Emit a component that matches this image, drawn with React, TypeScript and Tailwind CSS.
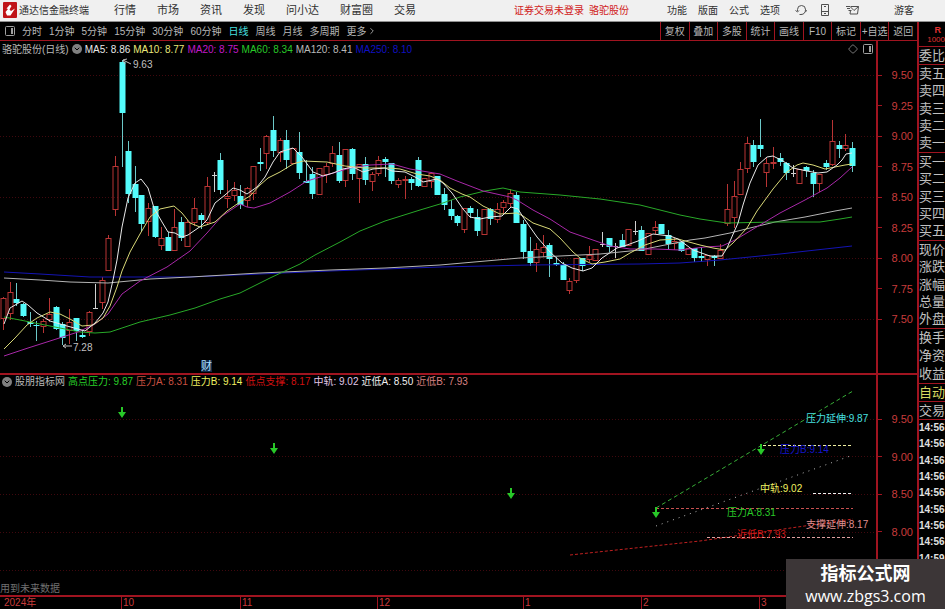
import React from 'react';
import { ChevronDown, ChevronRight, Diamond } from 'lucide-react';

const MENU = ['行情', '市场', '资讯', '发现', '问小达', '财富圈', '交易'];
const TOOLS = ['功能', '版面', '公式', '选项'];
const PERIODS = ['分时', '1分钟', '5分钟', '15分钟', '30分钟', '60分钟', '日线', '周线', '月线', '多周期'];
const ACTIONS = ['复权', '叠加', '多股', '统计', '画线', 'F10', '标记', '+自选', '返回'];

const MA_LEGEND = [
  { text: 'MA5: 8.86', color: 'text-[#e8e8e8]' },
  { text: 'MA10: 8.77', color: 'text-[#e8e87a]' },
  { text: 'MA20: 8.75', color: 'text-[#c018c8]' },
  { text: 'MA60: 8.34', color: 'text-[#28c828]' },
  { text: 'MA120: 8.41', color: 'text-[#b8b8b8]' },
  { text: 'MA250: 8.10', color: 'text-[#1010c0]' },
];

const SUB_LEGEND = [
  { text: '高点压力: 9.87', color: 'text-[#28d028]' },
  { text: '压力A: 8.31', color: 'text-[#c85040]' },
  { text: '压力B: 9.14', color: 'text-[#f0f060]' },
  { text: '低点支撑: 8.17', color: 'text-[#d01010]' },
  { text: '中轨: 9.02', color: 'text-[#e0c8e8]' },
  { text: '近低A: 8.50', color: 'text-[#f0f0f0]' },
  { text: '近低B: 7.93', color: 'text-[#d88080]' },
];

const PRICES = ['9.50', '9.25', '9.00', '8.75', '8.50', '8.25', '8.00', '7.75', '7.50'];
const SUB_PRICES = ['9.50', '9.00', '8.50', '8.00'];

const QUOTE_GROUPS = [
  { rows: ['委比'], height: 'h-[18px]', color: 'text-[#c0c0c0]' },
  { rows: ['卖五', '卖四', '卖三', '卖二', '卖一'], height: 'h-[88px]', color: 'text-[#c0c0c0]' },
  { rows: ['买一', '买二', '买三', '买四', '买五'], height: 'h-[88px]', color: 'text-[#c0c0c0]' },
  { rows: ['现价', '涨跌', '涨幅', '总量', '外盘'], height: 'h-[88px]', color: 'text-[#c0c0c0]' },
  { rows: ['换手', '净资', '收益'], height: 'h-[55px]', color: 'text-[#c0c0c0]' },
  { rows: ['自动'], height: 'h-[18px]', color: 'text-[#d8d860]' },
  { rows: ['交易'], height: 'h-[18px]', color: 'text-[#c0c0c0]' },
];

const TICKS = ['14:56', '14:56', '14:56', '14:56', '14:56', '14:56', '14:56', '14:56', '14:59'];

// kind, body top, body bottom, high, low (plot coordinates)
// d = falling, u = rising, x = doji
type Candle = [string, number, number, number, number];

const CANDLES: Candle[] = [
  ['u', 298, 319, 297, 330], ['u', 292, 314, 282, 320], ['d', 299, 303, 283, 306], ['d', 304, 316, 303, 317],
  ['d', 322, 324, 312, 327], ['d', 325, 326, 321, 341], ['u', 321, 327, 319, 333], ['u', 314, 320, 298, 322],
  ['d', 307, 329, 306, 330], ['d', 324, 338, 322, 345], ['u', 322, 331, 309, 344], ['d', 318, 331, 318, 341],
  ['d', 335, 337, 330, 338], ['u', 312, 332, 311, 336], ['x', 308, 308, 284, 308], ['u', 280, 303, 277, 309],
  ['u', 238, 271, 235, 271], ['u', 166, 210, 156, 216], ['d', 62, 113, 60, 167], ['d', 151, 194, 141, 203],
  ['d', 184, 198, 166, 212], ['d', 195, 224, 195, 232], ['u', 208, 222, 203, 236], ['d', 206, 237, 206, 238],
  ['u', 238, 246, 227, 250], ['d', 237, 251, 232, 251], ['u', 227, 251, 209, 251], ['d', 222, 238, 217, 241],
  ['u', 222, 247, 220, 247], ['u', 208, 223, 198, 226], ['d', 215, 220, 213, 229], ['u', 186, 223, 177, 225],
  ['x', 175, 175, 172, 192], ['d', 160, 190, 153, 194], ['u', 196, 199, 180, 208], ['u', 190, 196, 182, 201],
  ['d', 196, 205, 185, 209], ['u', 188, 201, 187, 207], ['u', 166, 194, 166, 200], ['d', 162, 164, 148, 171],
  ['u', 136, 154, 135, 169], ['d', 130, 151, 116, 157], ['u', 140, 153, 138, 162], ['d', 140, 160, 130, 169],
  ['u', 148, 164, 148, 164], ['d', 152, 173, 132, 179], ['d', 181, 183, 160, 183], ['d', 174, 194, 167, 199],
  ['u', 168, 195, 168, 195], ['u', 166, 175, 163, 183], ['u', 153, 164, 146, 167], ['d', 155, 181, 142, 183],
  ['u', 149, 181, 149, 187], ['d', 149, 174, 148, 180], ['u', 164, 179, 164, 203], ['d', 164, 180, 157, 185],
  ['u', 174, 182, 172, 191], ['u', 160, 174, 156, 176], ['d', 159, 162, 157, 177], ['d', 163, 181, 163, 184],
  ['u', 180, 185, 178, 188], ['u', 179, 181, 176, 199], ['d', 179, 183, 177, 190], ['d', 160, 186, 157, 187],
  ['u', 178, 187, 178, 187], ['u', 173, 182, 172, 188], ['d', 176, 195, 176, 195], ['d', 194, 205, 188, 210],
  ['d', 209, 216, 200, 220], ['d', 216, 223, 215, 226], ['u', 208, 230, 208, 233], ['d', 208, 213, 206, 218],
  ['d', 217, 231, 209, 236], ['u', 209, 235, 209, 235], ['d', 209, 219, 208, 225], ['u', 209, 220, 203, 223],
  ['u', 202, 208, 200, 214], ['u', 193, 204, 189, 207], ['d', 195, 223, 192, 223], ['d', 224, 252, 220, 259],
  ['d', 251, 263, 237, 266], ['u', 249, 263, 243, 272], ['u', 247, 253, 235, 257], ['d', 245, 259, 243, 277],
  ['d', 263, 265, 257, 266], ['d', 265, 280, 262, 280], ['u', 281, 291, 278, 294], ['u', 258, 281, 258, 283],
  ['d', 258, 266, 258, 271], ['u', 255, 260, 246, 262], ['u', 249, 261, 249, 261], ['x', 244, 244, 232, 247],
  ['d', 238, 247, 238, 252], ['x', 246, 246, 243, 258], ['d', 240, 247, 234, 247], ['u', 229, 246, 229, 246],
  ['x', 231, 231, 221, 235], ['d', 230, 251, 226, 251], ['u', 233, 255, 233, 255], ['u', 227, 231, 221, 234],
  ['d', 224, 234, 224, 234], ['d', 235, 244, 230, 250], ['u', 241, 244, 238, 250], ['d', 242, 251, 242, 252],
  ['u', 248, 255, 248, 255], ['d', 248, 258, 248, 262], ['d', 256, 258, 247, 262], ['u', 255, 260, 255, 266],
  ['d', 256, 258, 255, 266], ['u', 250, 259, 244, 259], ['u', 209, 224, 184, 226], ['u', 196, 218, 181, 228],
  ['u', 169, 195, 162, 195], ['u', 143, 169, 137, 173], ['d', 145, 162, 140, 167], ['d', 145, 149, 119, 157],
  ['u', 163, 173, 158, 187], ['u', 162, 163, 147, 169], ['d', 158, 162, 153, 166], ['d', 163, 173, 162, 180],
  ['x', 173, 173, 165, 177], ['u', 169, 184, 169, 184], ['d', 167, 171, 166, 177], ['d', 173, 184, 170, 197],
  ['u', 174, 184, 174, 192], ['d', 163, 167, 160, 170], ['u', 141, 165, 120, 166], ['d', 145, 149, 141, 158],
  ['u', 145, 149, 134, 151], ['d', 148, 166, 142, 172],
];

const MA_LINES = [
  { stroke: '#1414b4', points: '4,272 40,274 90,277 190,277 260,274 330,271 440,267 530,265 640,264 680,263 720,260 780,254 852,246' },
  { stroke: '#b4b4b4', points: '4,278 40,280 70,282 108,283 150,279 190,277 225,275 260,273 330,270 385,268 440,265 520,258 560,256 600,254 640,250 660,246 690,240 705,238 730,233 750,228 775,222 805,217 835,211 852,208' },
  { stroke: '#28a828', points: '4,317 20,320 50,326 80,332 95,333 110,332 122,328 140,322 170,315 195,308 220,299 240,293 270,278 300,264 315,255 340,242 360,231 385,221 420,210 440,204 460,197 485,191 503,188 520,192 560,195 600,199 640,205 680,215 700,219 727,223 775,222 820,222 840,219 852,217' },
  { stroke: '#a828a8', points: '4,356 28,348 50,341 78,332 95,324 108,314 122,294 140,281 167,267 190,251 207,233 222,216 240,204 247,207 254,208 270,203 290,192 307,181 330,174 350,168 370,165 392,164 410,169 440,174 457,181 483,191 510,197 517,200 533,210 550,219 570,232 590,239 610,246 630,249 655,249 680,250 705,247 722,246 735,240 755,228 780,213 805,200 827,188 840,178 852,167' },
  { stroke: '#d8d878', points: '4,349 15,338 27,325 37,318 50,312 60,314 70,319 82,326 93,325 103,318 110,306 117,287 122,271 130,252 140,234 150,217 160,209 174,206 182,213 190,223 200,227 215,222 227,211 240,202 250,196 260,185 268,178 280,172 293,164 303,161 327,162 345,166 365,168 390,168 400,169 417,174 430,176 440,180 450,188 462,194 470,197 483,206 500,214 517,213 523,216 533,223 550,229 560,238 573,252 580,258 592,264 605,262 620,259 630,253 645,245 660,240 678,239 700,245 713,248 725,250 733,243 747,228 757,211 773,189 787,172 797,165 803,163 813,165 825,169 835,167 845,165 852,164' },
  { stroke: '#e8e8e8', points: '4,324 10,308 22,301 28,305 37,313 50,321 67,326 78,329 85,331 95,323 103,313 108,302 113,280 117,260 122,227 128,198 135,183 141,179 148,188 154,208 162,222 168,232 175,233 182,237 188,235 201,226 207,220 215,203 225,195 233,188 240,190 247,194 257,187 265,177 273,162 280,152 293,148 302,157 313,172 323,176 333,173 343,169 353,167 363,172 373,169 385,168 392,171 405,172 417,178 423,182 437,179 443,183 452,193 463,209 470,217 480,219 490,217 502,216 511,207 518,209 523,217 537,237 550,252 562,263 572,268 583,271 592,268 602,258 617,248 627,245 638,241 653,234 670,236 678,239 693,250 710,256 722,256 727,248 738,223 743,205 750,183 758,165 767,157 773,156 783,161 793,168 807,171 818,173 827,172 837,165 842,160 846,154 852,153' },
];

const SIGNALS = [[122, 412], [274, 448], [511, 493], [656, 512], [761, 449]];

const SUB_LABELS = [
  { x: 806, y: 422, fill: '#48e0e0', text: '压力延伸:9.87' },
  { x: 780, y: 453, fill: '#1414c8', text: '压力B:9.14' },
  { x: 760, y: 492, fill: '#f0f060', text: '中轨:9.02' },
  { x: 727, y: 516, fill: '#28c828', text: '压力A:8.31' },
  { x: 806, y: 528, fill: '#e09090', text: '支撑延伸:8.17' },
  { x: 737, y: 538, fill: '#d01818', text: '近低B:7.93' },
];

function CandleMark({ candle, index }: { candle: Candle; index: number }) {
  const [kind, top, bottom, high, low] = candle;
  const x = Math.round(3.2 + 6.58 * index) + 0.5;

  if (kind === 'x') {
    return <path d={`M${x} ${high}V${low}M${x - 2.5} ${top + 0.5}h5`} stroke="#d0d0d0" fill="none" />;
  }
  if (kind === 'd') {
    return (
      <g>
        <path d={`M${x} ${high}V${low}`} stroke="#6cc8c8" />
        <rect x={x - 3} y={top} width="6" height={bottom - top} fill="#54fcfc" />
      </g>
    );
  }
  return (
    <g stroke="#b83434" fill="none">
      <path d={`M${x} ${high}V${top}M${x} ${bottom}V${low}`} />
      <rect x={x - 2.5} y={top + 0.5} width="5" height={Math.max(bottom - top - 1, 1)} />
    </g>
  );
}

function GridLines({ rows }: { rows: number[] }) {
  return (
    <g stroke="#40080e" strokeDasharray="1 2">
      {rows.map((y) => <path key={y} d={`M0 ${y + 0.5}H876`} />)}
    </g>
  );
}

function PriceChart() {
  return (
    <svg viewBox="0 57 876 316" className="block w-full" role="img" aria-label="日线">
      <GridLines rows={[75, 136, 197, 258, 319]} />
      {CANDLES.map((candle, i) => <CandleMark key={i} candle={candle} index={i} />)}
      {MA_LINES.map((line) => (
        <polyline key={line.stroke} points={line.points} fill="none" stroke={line.stroke} strokeLinejoin="round" />
      ))}
      <g fill="none" stroke="#c0c0c0">
        <path d="M131 64L123 60M123 60l4 -1M123 60l2 4" />
        <path d="M72 346H63M63 346l3 -2M63 346l3 2" />
      </g>
      <g fill="#c0c0c0" fontSize="10">
        <text x="133" y="68">9.63</text>
        <text x="73" y="351">7.28</text>
      </g>
      <rect x="201" y="360" width="11" height="12" fill="#102848" />
      <text x="201" y="370" fontSize="11" fill="#b0e0ff">财</text>
    </svg>
  );
}

function SignalChart() {
  return (
    <svg viewBox="0 389 876 206" className="block w-full" role="img" aria-label="股朋指标网">
      <GridLines rows={[419, 456, 494, 532, 570]} />
      <g fill="none">
        <path d="M656 508L853 391" stroke="#38b038" strokeDasharray="4 3" />
        <path d="M763 445.500H852" stroke="#f0f0a0" strokeDasharray="3 2" />
        <path d="M656 526L853 455" stroke="#b8b8b8" strokeDasharray="1 5" />
        <path d="M813 493.500H852" stroke="#f0f0f0" strokeDasharray="3 2" />
        <path d="M656 508.500H853" stroke="#c85050" strokeDasharray="3 2" />
        <path d="M570 555L700 541L770 531L853 519" stroke="#c02020" strokeDasharray="3 2" />
        <path d="M707 537.500H853" stroke="#e0a0a0" strokeDasharray="3 2" />
      </g>
      {SIGNALS.map(([x, y]) => (
        <path key={x} d={`M${x - 1} ${y - 5}h2v5h3l-4 6l-4 -6h3z`} fill="#28c828" />
      ))}
      <g fontSize="10">
        {SUB_LABELS.map((label) => (
          <text key={label.text} x={label.x} y={label.y} fill={label.fill}>{label.text}</text>
        ))}
      </g>
      <text x="0" y="592" fontSize="10" fill="#707070">用到未来数据</text>
    </svg>
  );
}

function PriceAxis({ prices, className }: { prices: string[]; className: string }) {
  return (
    <div className={`flex w-[41px] shrink-0 flex-col justify-between border-l-2 border-[#a01420] text-[11px] leading-4 text-[#c83c3c] ${className}`}>
      {prices.map((price) => (
        <div key={price} className="flex items-center justify-between pr-1">
          <span className="h-px w-1 bg-[#a01420]" />
          {price}
        </div>
      ))}
    </div>
  );
}

function CollapseButton() {
  return (
    <button aria-label="展开" className="flex size-[10px] shrink-0 items-center justify-center rounded-full bg-[#808080] text-black">
      <ChevronDown size={8} strokeWidth={3} />
    </button>
  );
}

function PanelIcon() {
  return (
    <svg width="10" height="10" viewBox="0 0 10 10" fill="none" stroke="#a0a0a0">
      <rect x="0.500" y="0.500" width="9" height="9" rx="1" />
      <rect x="6" y="2" width="2" height="6" fill="#a0a0a0" stroke="none" />
    </svg>
  );
}

function Header() {
  return (
    <header className="flex h-[22px] items-center border-b border-[#909090] bg-[#f0f0f0] pr-[31px] pl-[3px] pb-px text-[10px] whitespace-nowrap text-[#303030]">
      <svg width="14" height="16" viewBox="0 0 14 16" className="mr-[2px] shrink-0">
        <rect width="14" height="16" rx="1" fill="#c01418" />
        <path d="M7 2.500L3.500 6.500L5 7L2.500 10L4 13.500H7.500L12 6.500L8 9L6.500 7.500L8.500 4z" fill="#fff" />
      </svg>
      <span>通达信金融终端</span>
      <nav className="ml-[25px] flex gap-[21px] text-[11px]">
        {MENU.map((item) => <button key={item}>{item}</button>)}
      </nav>
      <div className="mr-[38px] ml-auto flex gap-[5px] text-[#d02020]">
        <span>证券交易未登录</span>
        <span>骆驼股份</span>
      </div>
      <div className="flex gap-[11px]">
        {TOOLS.map((item) => <button key={item}>{item}</button>)}
      </div>
      <div className="ml-[15px] flex items-center text-[#505050]">
        <button aria-label="客服">
          <svg width="12" height="11" viewBox="0 0 12 11" fill="none" stroke="currentColor">
            <path d="M2.500 6V4.500A4 4 0 0 1 10.500 4.500C10.500 7.500 9 9.500 6 9.500" />
            <path d="M0.500 5.500L2.500 7L4 5.500M10.500 4.500l1 1l-1 1.500M4.500 9.500h2" />
          </svg>
        </button>
        <button aria-label="手机" className="ml-[14px]">
          <svg width="8" height="12" viewBox="0 0 8 12" fill="none" stroke="currentColor">
            <path d="M0.500 0.500h7v11h-7zM0.500 7.500h7M3 9.500h2M3 2.500h2" />
          </svg>
        </button>
        <button aria-label="邮件" className="ml-[17px]">
          <svg width="14" height="10" viewBox="0 0 14 10" fill="none" stroke="currentColor">
            <path d="M4.500 1.500h8l-1 7.500h-7.500l0.500 -3.500M4.500 2l3.500 3.500l4.500 -4M0 1.500h4M1 3.500h3M2.500 5.500h3" />
          </svg>
        </button>
      </div>
      <button className="ml-[34px]">游客</button>
    </header>
  );
}

function Toolbar() {
  return (
    <div className="flex h-[19px] items-center justify-between border-b border-[#a01420] text-[10px] whitespace-nowrap text-[#b8b8b8]">
      <div className="flex h-full items-center gap-[7px]">
        <button aria-label="侧栏" className="flex h-full w-[15px] items-center justify-end">
          <PanelIcon />
        </button>
        {PERIODS.map((period) => (
          <button key={period} className={period === '日线' ? 'text-[#48e0e0]' : ''}>{period}</button>
        ))}
        <button className="flex items-center">更多<ChevronRight size={10} /></button>
      </div>
      <div className="grid h-full w-[257px] grid-cols-9">
        {ACTIONS.map((action) => (
          <button key={action} className="border-l border-[#a01420]">{action}</button>
        ))}
      </div>
    </div>
  );
}

function QuotePanel() {
  return (
    <aside className="w-[28px] shrink-0 border-l-2 border-[#a01420] text-[13px] whitespace-nowrap">
      <div className="flex h-[24px] flex-col items-end pt-[3px] text-[#e03030]">
        <b className="pr-1 text-[9px] leading-[10px]">R</b>
        <span className="text-[8px] leading-[10px]">1000</span>
      </div>
      {QUOTE_GROUPS.map((group) => (
        <div key={group.rows[0]} className={`flex flex-col border-t border-[#a01420] ${group.height} ${group.color}`}>
          {group.rows.map((row) => (
            <span key={row} className="flex flex-1 items-center leading-4">{row}</span>
          ))}
        </div>
      ))}
      <div className="flex h-[148px] flex-col border-t border-[#a01420] text-[10px] leading-4 font-bold text-[#e0e0e0]">
        {TICKS.map((tick, i) => <span key={i} className="flex flex-1 items-center">{tick}</span>)}
      </div>
    </aside>
  );
}

function TimeAxis() {
  const label = 'border-l border-[#a01420] pl-px';
  return (
    <div className="grid grid-cols-[121fr_119fr_137fr_146fr_118fr_118fr_158fr] border-t-2 border-[#a01420] text-[10px] leading-3 text-[#c83c3c]">
      <span className="pl-1">2024年</span>
      <span className={label}>10</span>
      <span className={label}>11</span>
      <span className={label}>12</span>
      <span className={label}>1</span>
      <span className={label}>2</span>
      <span className={label}>3</span>
    </div>
  );
}

export default function App() {
  return (
    <div className="flex min-h-screen flex-col bg-black font-['Liberation_Sans','Noto_Sans_CJK_SC',sans-serif]">
      <Header />
      <div className="flex flex-1">
        <main className="min-w-0 flex-1">
          <Toolbar />
          <section className="flex">
            <div className="min-w-0 flex-1">
              <div className="flex h-4 items-center gap-[3px] pl-[2px] text-[10px] whitespace-nowrap">
                <span className="text-[#b8b8b8]">骆驼股份(日线)</span>
                <CollapseButton />
                {MA_LEGEND.map((ma) => <span key={ma.text} className={ma.color}>{ma.text}</span>)}
                <div className="mr-[3px] ml-auto flex items-center gap-[5px]">
                  <Diamond size={10} color="#909090" />
                  <PanelIcon />
                </div>
              </div>
              <PriceChart />
            </div>
            <PriceAxis prices={PRICES} className="pt-[26px] pb-[46px]" />
          </section>
          <section className="flex border-t-2 border-[#a01420]">
            <div className="min-w-0 flex-1">
              <div className="flex h-[14px] items-center gap-[3px] pl-[2px] text-[10px] leading-3 whitespace-nowrap">
                <CollapseButton />
                <span className="text-[#b8b8b8]">股朋指标网</span>
                {SUB_LEGEND.map((item) => <span key={item.text} className={item.color}>{item.text}</span>)}
              </div>
              <SignalChart />
            </div>
            <PriceAxis prices={SUB_PRICES} className="pt-[36px] pb-[55px]" />
          </section>
          <TimeAxis />
        </main>
        <QuotePanel />
      </div>
      <div className="fixed right-0 bottom-0 flex h-[50px] w-[159px] flex-col items-center justify-center bg-[#3c3637] text-white">
        <b className="text-[18px] leading-6">指标公式网</b>
        <a href="#" className="font-['Open_Sans',sans-serif] text-[16px] leading-5">www.zbgs3.com</a>
      </div>
    </div>
  );
}
